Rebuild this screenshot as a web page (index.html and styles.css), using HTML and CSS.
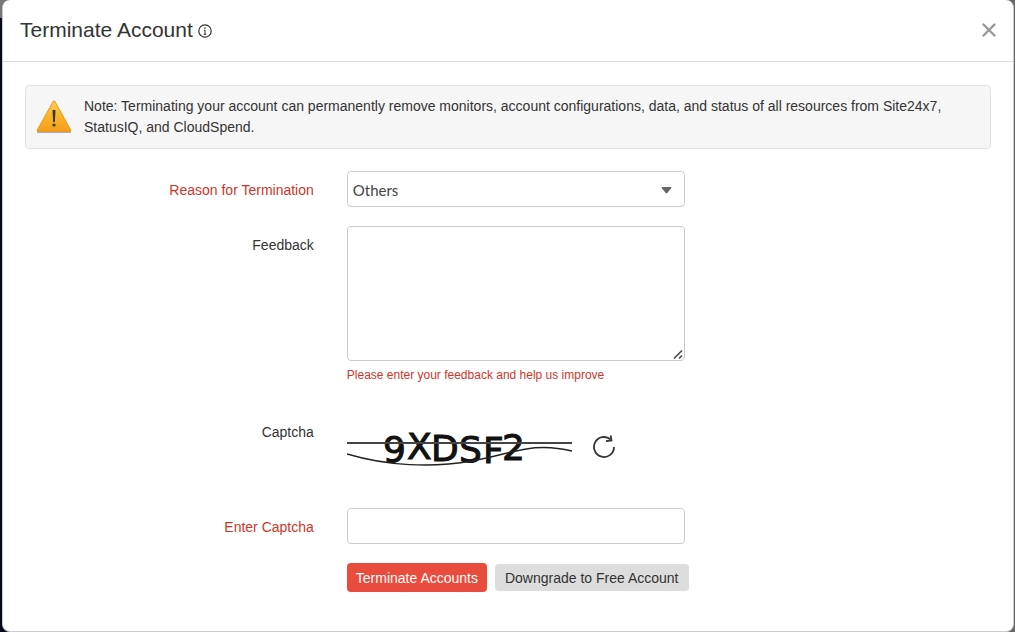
FILE: index.html
```html
<!DOCTYPE html>
<html lang="en">

<head>
    <meta charset="UTF-8">
    <meta name="viewport" content="width=device-width, initial-scale=1.0">
    <title>Terminate Account</title>
    <link rel="stylesheet" href="styles.css">
</head>

<body>
    <div class="modal" role="dialog" aria-labelledby="modalTitle">
        <header class="modal-header">
            <h1 id="modalTitle">Terminate Account</h1>
            <svg class="info-icon" width="14" height="14" viewBox="0 0 14 14" fill="none" stroke="#333">
                <circle cx="7" cy="7" r="6.2" stroke-width="1.2" />
                <path d="M7 6v4.5M6 6.2h1M5.8 10.3h2.4" stroke-width="1" />
                <path d="M6.4 4h1.2" stroke-width="1.3" />
            </svg>
            <button type="button" class="close" aria-label="Close">
                <svg width="14" height="14" viewBox="0 0 14 14" stroke="#999" stroke-width="2.4" stroke-linecap="round">
                    <path d="M1.5 1.5l11 11M12.5 1.5l-11 11" />
                </svg>
            </button>
        </header>

        <main class="modal-body">
            <div class="note">
                <svg class="warning-icon" width="36" height="34" viewBox="0 0 36 34">
                    <defs>
                        <linearGradient id="amber" x1="0" y1="0" x2="0" y2="1">
                            <stop offset="0" stop-color="#fbd063" />
                            <stop offset="0.4" stop-color="#fbb829" />
                            <stop offset="1" stop-color="#f5a11c" />
                        </linearGradient>
                    </defs>
                    <path d="M1 31.5h34v1.6H1z" fill="#aab" />
                    <path d="M16.6 1.6q1.4-2 2.8 0L35 29.6q.8 2.2-1.4 2.4H2.4q-2.2-.2-1.4-2.4z" fill="#ee9a20" />
                    <path d="M17.2 2.4q.8-1.2 1.6 0L33.6 29q.4 1-.8 1H3.2q-1.2 0-.8-1z" fill="url(#amber)" />
                    <path d="M16.5 10h3l-.6 12h-1.8z" fill="#333a33" />
                    <circle cx="18" cy="25" r="1.6" fill="#333a33" />
                </svg>
                <p>Note: Terminating your account can permanently remove monitors, account configurations, data, and status of all resources from Site24x7, StatusIQ, and CloudSpend.</p>
            </div>

            <form class="form">
                <div class="row">
                    <label class="required" for="reason">Reason for Termination</label>
                    <div class="field select-wrap">
                        <select id="reason">
                            <option>Others</option>
                        </select>
                        <svg class="arrow" width="11" height="7" viewBox="0 0 11 7">
                            <path d="M1.5 0h8q1.5 0 .6 1.2L6.3 6q-.8.9-1.6 0L.9 1.2Q0 0 1.5 0z" fill="#666" />
                        </svg>
                    </div>
                </div>

                <div class="row">
                    <label for="feedback">Feedback</label>
                    <div class="field">
                        <div class="textarea-wrap">
                            <textarea id="feedback"></textarea>
                            <svg class="grip" width="10" height="9" viewBox="0 0 10 9" stroke="#444" stroke-width="1.5">
                                <path d="M1 8.5L9 .5M6 8.5l3-3" />
                            </svg>
                        </div>
                        <p class="error">Please enter your feedback and help us improve</p>
                    </div>
                </div>

                <div class="row captcha-row">
                    <span class="label">Captcha</span>
                    <div class="field captcha">
                        <svg width="225" height="50" viewBox="0 0 225 50" role="img" aria-label="Captcha">
                            <text class="captcha-text" x="36 60 84 112 136 155" y="40 37 39 40 41 38">9XDSF2</text>
                            <path d="M0 21h225" stroke="#444" stroke-width="2" />
                            <path d="M0 32C40 44 85 46 125 39S185 19 225 29" fill="none" stroke="#222" stroke-width="1.5" />
                        </svg>
                        <button type="button" class="refresh" aria-label="Refresh captcha">
                            <svg width="24" height="24" viewBox="0 0 24 24" fill="none" stroke="#333" stroke-width="1.8">
                                <path d="M22 12a10 10 0 1 1-3.5-7.6" />
                                <path d="M18.6.5l.9 5-5.5.7" />
                            </svg>
                        </button>
                    </div>
                </div>

                <div class="row">
                    <label class="required" for="captchaInput">Enter Captcha</label>
                    <div class="field">
                        <input type="text" id="captchaInput">
                    </div>
                </div>

                <div class="actions">
                    <button type="button" class="btn btn-danger">Terminate Accounts</button>
                    <button type="button" class="btn btn-default">Downgrade to Free Account</button>
                </div>
            </form>
        </main>
    </div>
</body>

</html>
```
FILE: styles.css
```css
* {
    box-sizing: border-box;
}

body {
    margin: 0;
    min-height: 100vh;
    display: flex;
    padding: 0 1px 0 2px;
    background: linear-gradient(#777 18px, #040a18 18px) left / 50% 100% no-repeat #666;
    font-family: "Liberation Sans", Arial, sans-serif;
    font-size: 14px;
    color: #333;
}

.modal {
    flex: 1;
    background: #fff;
    border: 1px solid #ccc;
    border-top: none;
    border-radius: 8px;
}

.modal-header {
    display: flex;
    align-items: center;
    height: 62px;
    padding: 0 17px 2px;
    border-bottom: 1px solid #ddd;
}

h1 {
    margin: 0;
    font-size: 21px;
    font-weight: 400;
}

.info-icon {
    margin: 3px 0 0 5px;
}

.close {
    display: flex;
    margin-left: auto;
    padding: 0;
    border: none;
    background: none;
    cursor: pointer;
}

.modal-body {
    padding: 23px 22px;
}

/* Warning note */
.note {
    display: flex;
    align-items: center;
    gap: 12px;
    min-height: 64px;
    padding: 0 12px 0 10px;
    background: #f6f6f6;
    border: 1px solid #e2e2e2;
    border-radius: 4px;
}

.note p {
    margin: 0;
    line-height: 21px;
}

.warning-icon {
    flex: none;
}

/* Form */
.form {
    display: flex;
    flex-direction: column;
    gap: 19px;
    margin-top: 22px;
}

.row {
    display: grid;
    grid-template-columns: 30% 35%;
    column-gap: 32px;
}

.row label,
.row .label {
    padding: 8px 1px 0 0;
    line-height: 22px;
    text-align: right;
}

.row .required,
.error {
    color: #d03528;
}

select,
textarea,
input {
    display: block;
    width: 100%;
    height: 36px;
    padding: 0 5px;
    border: 1px solid #ccc;
    border-radius: 4px;
    background: #fff;
    color: #444;
    font-family: Lato, sans-serif;
    font-size: 15px;
    outline: none;
}

.select-wrap,
.textarea-wrap {
    position: relative;
}

select {
    appearance: none;
    padding-top: 2px;
}

.arrow {
    position: absolute;
    top: 16px;
    right: 13px;
    pointer-events: none;
}

textarea {
    height: 135px;
    resize: none;
}

.grip {
    position: absolute;
    right: 2px;
    bottom: 2px;
    pointer-events: none;
}

.error {
    margin: 4px 0 0;
    font-size: 12px;
    line-height: 20px;
}

/* Captcha */
.captcha-row {
    margin: 9px 0 17px;
}

.captcha {
    display: flex;
    align-items: center;
    gap: 20px;
    height: 59px;
    padding-top: 8px;
}

.captcha-text {
    font-family: "DejaVu Sans", sans-serif;
    font-size: 36px;
    fill: #111;
    stroke: #111;
    stroke-width: 1px;
}

.refresh {
    display: flex;
    padding: 0;
    border: none;
    background: none;
    cursor: pointer;
}

/* Buttons */
.actions {
    display: flex;
    align-items: center;
    gap: 8px;
    margin-left: calc(30% + 32px);
}

.btn {
    padding: 0 9px;
    border: none;
    border-radius: 4px;
    font-family: inherit;
    font-size: 14px;
    white-space: nowrap;
    cursor: pointer;
}

.btn-danger {
    height: 29px;
    background: #e94b3c;
    color: #fff;
}

.btn-default {
    height: 27px;
    padding: 0 10px;
    background: #ddd;
    color: #333;
}
```
